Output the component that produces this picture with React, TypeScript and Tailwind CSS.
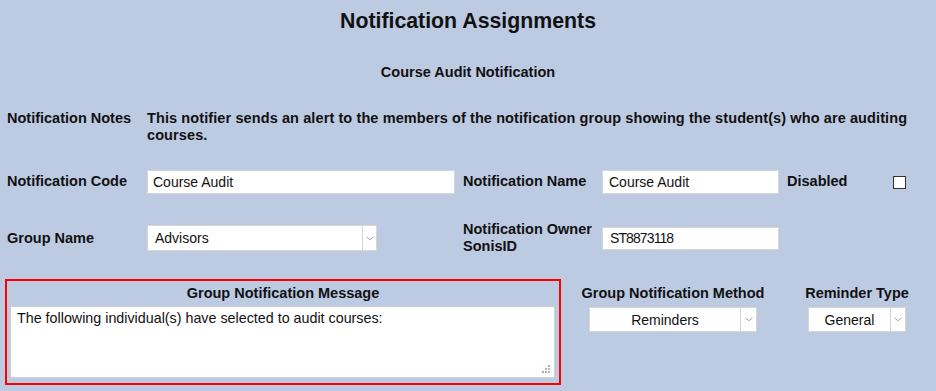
import React from "react";

function Chevron() {
  return (
    <svg width="8" height="5" viewBox="0 0 8 5" className="block">
      <polyline points="0.5,0.8 4,3.8 7.5,0.8" fill="none" stroke="#a8a8a8" strokeWidth="1" />
    </svg>
  );
}

function SelectBox({ value, className, center, arrowW }: { value: string; className: string; center?: boolean; arrowW: string }) {
  return (
    <div className={`flex bg-white border border-[#d6d6d6] font-normal ${className}`}>
      <div className={`flex-1 flex items-center text-[14px] leading-[16px] ${center ? "justify-center" : "pl-[7px]"}`}>
        {value}
      </div>
      <div className={`${arrowW} border-l border-[#d6d6d6] flex items-center justify-center`}>
        <Chevron />
      </div>
    </div>
  );
}

export default function App() {
  return (
    <div className="w-[936px] h-[391px] overflow-hidden bg-[#bccae2] text-[#111] font-['Liberation_Sans',Arial,sans-serif]">
      <h1 className="text-center text-[21.3px] font-bold leading-[25px] pt-[9px]">Notification Assignments</h1>
      <div className="text-center text-[14.5px] font-bold leading-[16px] mt-[30px]">Course Audit Notification</div>

      {/* notes */}
      <div className="flex pl-[7px] mt-[30px] text-[14.5px] font-bold leading-[17px]">
        <div className="w-[140px]">Notification Notes</div>
        <div className="w-[782px] tracking-[0.1px]">
          This notifier sends an alert to the members of the notification group showing the student(s) who are auditing courses.
        </div>
      </div>

      {/* code / name / disabled */}
      <div className="flex items-center pl-[7px] mt-[26px] h-[24px] text-[14.5px] font-bold">
        <div className="w-[140px]">Notification Code</div>
        <div className="w-[308px] h-[24px] bg-white border border-[#d6d6d6] pl-[5px] flex items-center text-[14px] font-normal">
          Course Audit
        </div>
        <div className="w-[139px] ml-[8px]">Notification Name</div>
        <div className="w-[177px] h-[24px] bg-white border border-[#d6d6d6] pl-[6px] flex items-center text-[14px] font-normal">
          Course Audit
        </div>
        <div className="w-[106px] ml-[8px]">Disabled</div>
        <div className="w-[13px] h-[13px] bg-white border border-[#333]" />
      </div>

      {/* group / owner */}
      <div className="flex items-center pl-[7px] mt-[27px] h-[34px] text-[14.5px] font-bold leading-[17px]">
        <div className="w-[140px]">Group Name</div>
        <SelectBox value="Advisors" className="w-[230px] h-[26px]" arrowW="w-[14px]" />
        <div className="w-[139px] ml-[86px]">
          Notification Owner
          <br />
          SonisID
        </div>
        <div className="w-[177px] h-[23px] bg-white border border-[#d6d6d6] pl-[7px] flex items-center text-[14px] font-normal tracking-[-0.9px]">
          ST8873118
        </div>
      </div>

      {/* message + methods */}
      <div className="flex items-start mt-[24px]">
        <div className="ml-[5px] w-[556px] border-2 border-[#ff0000] pt-[4px] pb-[5px]">
          <div className="text-center text-[14.5px] font-bold leading-[16px]">Group Notification Message</div>
          <div className="relative ml-[3px] mt-[5px] w-[545px] h-[72px] bg-white border border-[#d0d0d0] px-[6px] pt-[3px] text-[14.3px] leading-[16px]">
            The following individual(s) have selected to audit courses:
            <svg width="9" height="9" viewBox="0 0 9 9" className="absolute right-[3px] bottom-[3px]">
              <rect x="6" y="0" width="2" height="2" fill="#b0b0b0" />
              <rect x="3" y="3" width="2" height="2" fill="#b0b0b0" />
              <rect x="6" y="3" width="2" height="2" fill="#b0b0b0" />
              <rect x="0" y="6" width="2" height="2" fill="#b0b0b0" />
              <rect x="3" y="6" width="2" height="2" fill="#b0b0b0" />
              <rect x="6" y="6" width="2" height="2" fill="#b0b0b0" />
            </svg>
          </div>
        </div>

        <div className="ml-[12px] w-[200px] pt-[6px] flex flex-col items-center">
          <div className="text-[14.5px] font-bold leading-[16px] whitespace-nowrap">Group Notification Method</div>
          <SelectBox value="Reminders" center className="mt-[6px] w-[168px] h-[25px]" arrowW="w-[16px]" />
        </div>

        <div className="ml-[24px] w-[120px] pt-[6px] flex flex-col items-center">
          <div className="text-[14.5px] font-bold leading-[16px] whitespace-nowrap">Reminder Type</div>
          <SelectBox value="General" center className="mt-[6px] w-[98px] h-[25px]" arrowW="w-[15px]" />
        </div>
      </div>
    </div>
  );
}
